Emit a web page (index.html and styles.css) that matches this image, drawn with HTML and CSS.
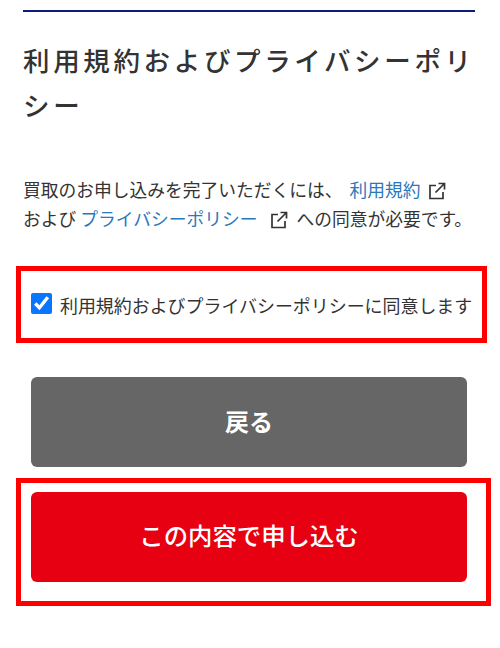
FILE: index.html
```html
<!DOCTYPE html>
<html lang="ja">
<head>
  <meta charset="UTF-8">
  <meta name="viewport" content="width=device-width, initial-scale=1.0">
  <title>利用規約およびプライバシーポリシー</title>
  <link rel="stylesheet" href="styles.css">
</head>
<body>
  <div class="rule"></div>

  <h2 class="title">利用規約およびプライバシーポリシー</h2>

  <p class="lead">
    買取のお申し込みを完了いただくには、<a href="#" class="link">利用規約</a><svg class="ext" viewBox="0 0 18 18"><path d="M8 3.5H2v13h13V10M10.5 1.5h6v6M16.5 1.5L7.5 10.5"/></svg><br>
    および <a href="#" class="link">プライバシーポリシー</a><svg class="ext ext-wide" viewBox="0 0 18 18"><path d="M8 3.5H2v13h13V10M10.5 1.5h6v6M16.5 1.5L7.5 10.5"/></svg>への同意が必要です。
  </p>

  <div class="agree-box">
    <label class="agree">
      <input type="checkbox" class="agree-check" checked>
      <span>利用規約およびプライバシーポリシーに同意します</span>
    </label>
  </div>

  <div class="back-wrap">
    <button class="btn btn-back">戻る</button>
  </div>

  <div class="submit-box">
    <button class="btn btn-submit">この内容で申し込む</button>
  </div>
</body>
</html>
```

FILE: styles.css
```css
body {
  font-family: "Noto Sans CJK JP", "Liberation Sans", sans-serif;
  background-color: #fff;
  color: #333;
  margin: 0;
  padding: 10px 0 0;
}
.rule {
  height: 2px;
  margin: 0 25px 0 23px;
  background-color: #0b1c78;
}
.title {
  margin: 25px 20px 0 23px;
  font-size: 26.5px;
  font-weight: 500;
  line-height: 45px;
  letter-spacing: 3.65px;
}
.lead {
  margin: 48px 20px 0 23px;
  font-size: 17.75px;
  line-height: 29px;
  white-space: nowrap;
}
.link {
  margin-left: 7px;
  color: #2a77bd;
  text-decoration: none;
}
.lead br + .link {
  margin-left: 0;
}
.ext {
  width: 18px;
  height: 18px;
  margin: 0 7px 0 7px;
  vertical-align: -3px;
  fill: none;
  stroke: #333;
  stroke-width: 1.7;
}
.ext-wide {
  margin: 0 8px 0 13px;
}
.agree-box {
  margin: 33px 13px 0 16px;
  height: 67px;
  border: 5px solid #f00;
  display: flex;
  align-items: center;
  padding-left: 10px;
}
.agree {
  display: flex;
  align-items: center;
  gap: 8px;
  font-size: 17.95px;
  white-space: nowrap;
}
.agree-check {
  width: 21px;
  height: 21px;
  margin: 0 0 2px;
  accent-color: #0a75ff;
}
.back-wrap {
  margin: 34px 33px 0 31px;
}
.btn {
  display: block;
  width: 100%;
  height: 90px;
  padding: 0 0 4px;
  border: none;
  border-radius: 6px;
  color: #fff;
  font-family: inherit;
  font-size: 24px;
  font-weight: 700;
  cursor: pointer;
}
.btn-back {
  background-color: #666;
}
.submit-box {
  margin: 11px 9px 0 16px;
  padding: 9px 19px 19px 10px;
  border: 5px solid #f00;
}
.btn-submit {
  padding-bottom: 6px;
  background-color: #e60012;
  font-size: 24.4px;
  font-weight: 500;
}
```
